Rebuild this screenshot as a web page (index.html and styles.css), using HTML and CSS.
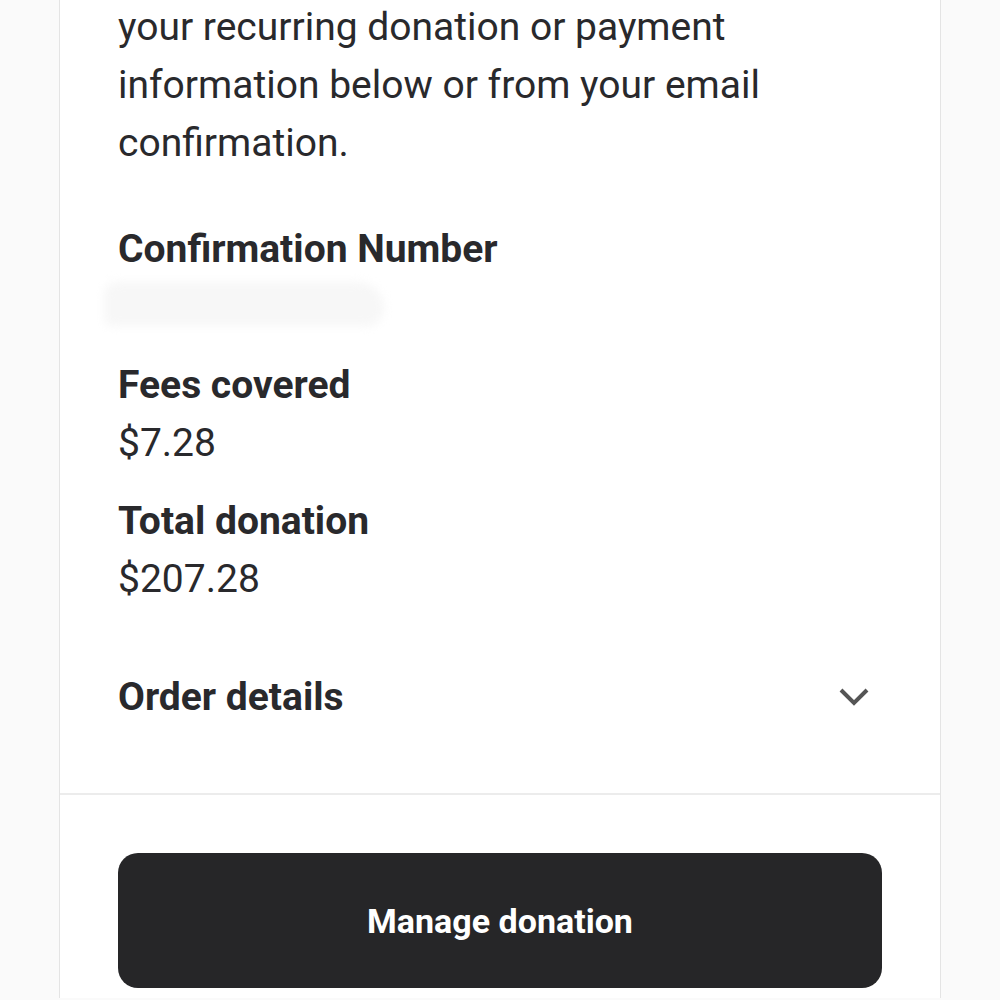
FILE: index.html
```html
<!DOCTYPE html>
<html>
<head>
<meta charset="utf-8">
<link rel="stylesheet" href="styles.css">
</head>
<body>
<div class="page">
  <div class="card">
    <div class="content">
      <p class="intro">your recurring donation or payment information below or from your email confirmation.</p>
      <div class="field">
        <div class="label">Confirmation Number</div>
        <div class="value redacted"><span class="smudge"></span></div>
      </div>
      <div class="field">
        <div class="label">Fees covered</div>
        <div class="value">$7.28</div>
      </div>
      <div class="field">
        <div class="label">Total donation</div>
        <div class="value">$207.28</div>
      </div>
      <div class="order">
        <div class="label">Order details</div>
        <svg class="chev" width="32" height="20" viewBox="0 0 32 20"><path d="M3 3 L16 16 L29 3" fill="none" stroke="#555" stroke-width="4"/></svg>
      </div>
    </div>
    <div class="footer">
      <button class="btn">Manage donation</button>
    </div>
  </div>
</div>
</body>
</html>
```
FILE: styles.css
```css
html, body {
  margin: 0;
  padding: 0;
  background: #fafafa;
  font-family: Roboto, "Noto Sans", sans-serif;
  color: #29292c;
}
.page {
  padding: 0 59px;
}
.card {
  background: #fff;
  border-left: 1px solid #e4e4e4;
  border-right: 1px solid #e4e4e4;
  min-height: 1000px;
}
.content {
  padding: 0 58px;
  border-bottom: 2px solid #ececec;
}
.intro {
  margin: -2px 0 48px;
  font-size: 39px;
  line-height: 58px;
}
.field {
  margin-bottom: 20px;
}
.label {
  font-size: 39px;
  font-weight: 700;
  line-height: 58px;
}
.value {
  font-size: 39px;
  line-height: 58px;
}
.redacted {
  height: 58px;
  position: relative;
}
.smudge {
  position: absolute;
  left: -14px;
  top: 4px;
  width: 280px;
  height: 44px;
  background: #f7f7f7;
  border-radius: 30px 60px 40px 20px;
  filter: blur(5px);
}
.order {
  margin-top: 60px;
  display: flex;
  align-items: center;
  justify-content: space-between;
  padding-bottom: 67px;
}
.chev {
  margin-right: 12px;
}
.footer {
  padding: 58px 58px 0;
}
.btn {
  width: 100%;
  height: 135px;
  border: none;
  border-radius: 20px;
  background: #262628;
  color: #fff;
  font-family: Roboto, "Noto Sans", sans-serif;
  font-size: 34px;
  font-weight: 700;
}
```
